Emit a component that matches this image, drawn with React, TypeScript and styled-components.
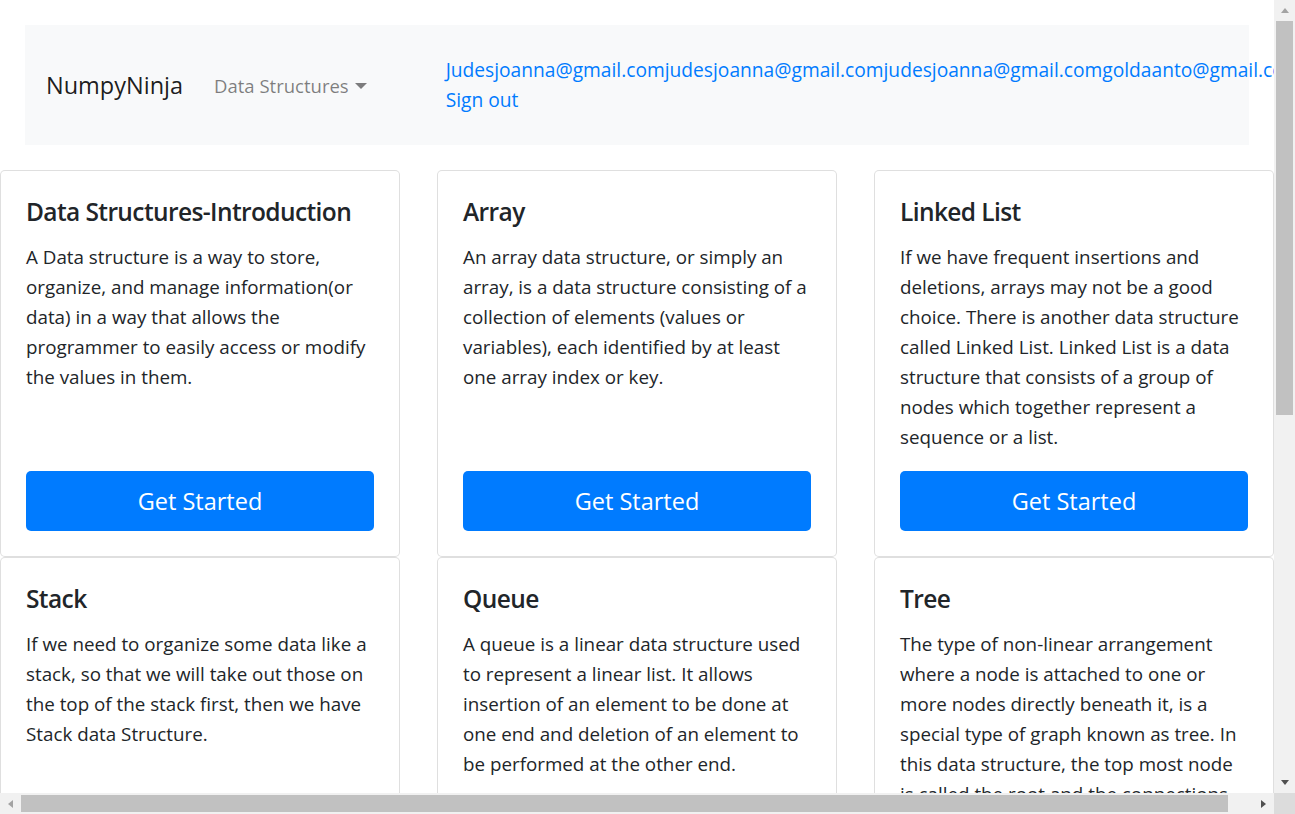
import React from 'react';
import styled, { createGlobalStyle } from 'styled-components';

interface Topic {
  title: string;
  text: string;
}

type Direction = 'up' | 'down' | 'left' | 'right';

const topics: Topic[] = [
  {
    title: 'Data Structures-Introduction',
    text: 'A Data structure is a way to store, organize, and manage information(or data) in a way that allows the programmer to easily access or modify the values in them.',
  },
  {
    title: 'Array',
    text: 'An array data structure, or simply an array, is a data structure consisting of a collection of elements (values or variables), each identified by at least one array index or key.',
  },
  {
    title: 'Linked List',
    text: 'If we have frequent insertions and deletions, arrays may not be a good choice. There is another data structure called Linked List. Linked List is a data structure that consists of a group of nodes which together represent a sequence or a list.',
  },
  {
    title: 'Stack',
    text: 'If we need to organize some data like a stack, so that we will take out those on the top of the stack first, then we have Stack data Structure.',
  },
  {
    title: 'Queue',
    text: 'A queue is a linear data structure used to represent a linear list. It allows insertion of an element to be done at one end and deletion of an element to be performed at the other end.',
  },
  {
    title: 'Tree',
    text: 'The type of non-linear arrangement where a node is attached to one or more nodes directly beneath it, is a special type of graph known as tree. In this data structure, the top most node is called the root and the connections between the nodes are called edges.',
  },
  {
    title: 'Graph',
    text: 'A graph is a non-linear data structure consisting of vertices (or nodes) and edges that connect pairs of vertices. Graphs are used to model networks such as roads, social links and web pages.',
  },
];

const userEmails = 'Judesjoanna@gmail.comjudesjoanna@gmail.comjudesjoanna@gmail.comgoldaanto@gmail.com';

function App(): JSX.Element {
  return (
    <>
      <GlobalStyle />
      <Page>
        <Navbar>
          <Brand>NumpyNinja</Brand>
          <DropdownToggle>Data Structures</DropdownToggle>
          <UserBox>
            <UserLink>{userEmails}</UserLink>
            <UserLink>Sign out</UserLink>
          </UserBox>
        </Navbar>
        <CardGrid>
          {topics.map((topic) => (
            <Card key={topic.title}>
              <CardTitle>{topic.title}</CardTitle>
              <CardText>{topic.text}</CardText>
              <StartButton>Get Started</StartButton>
            </Card>
          ))}
        </CardGrid>
      </Page>
      {/* window scrollbars, drawn since the browser hides its own */}
      <VScrollbar>
        <ScrollButton>
          <Arrow dir="up" />
        </ScrollButton>
        <VTrack>
          <VThumb />
        </VTrack>
        <ScrollButton>
          <Arrow dir="down" active />
        </ScrollButton>
      </VScrollbar>
      <HScrollbar>
        <ScrollButton>
          <Arrow dir="left" />
        </ScrollButton>
        <HTrack>
          <HThumb />
        </HTrack>
        <ScrollButton>
          <Arrow dir="right" active />
        </ScrollButton>
      </HScrollbar>
      <ScrollCorner />
    </>
  );
}

const GlobalStyle = createGlobalStyle`
  html,
  body {
    margin: 0;
    padding: 0;
    background: #fff;
    color: #212529;
    font-family: 'Open Sans', 'Noto Sans', sans-serif;
  }
  * {
    box-sizing: border-box;
  }
  ::-webkit-scrollbar {
    display: none;
  }
`;

const Page = styled.div`
  width: 1274px;
  padding: 25px 0 185px;
`;

const Navbar = styled.nav`
  height: 120px;
  margin: 0 25px;
  padding: 0 21px;
  display: flex;
  align-items: center;
  background-color: #f8f9fa;
  & > * {
    flex-shrink: 0;
  }
`;

const Brand = styled.span`
  margin-right: 31px;
  font-size: 23.5px;
  line-height: 30px;
  color: rgba(0, 0, 0, 0.9);
`;

const DropdownToggle = styled.span`
  display: flex;
  align-items: center;
  padding-top: 2px;
  white-space: nowrap;
  font-size: 18.5px;
  line-height: 30px;
  color: rgba(0, 0, 0, 0.5);
  &::after {
    content: '';
    margin-left: 6px;
    border-top: 6px solid;
    border-right: 6px solid transparent;
    border-left: 6px solid transparent;
  }
`;

const UserBox = styled.div`
  display: flex;
  flex-direction: column;
  margin-left: 79px;
`;

const UserLink = styled.a`
  font-size: 19.2px;
  line-height: 30px;
  color: #007bff;
  white-space: nowrap;
  cursor: pointer;
`;

const CardGrid = styled.section`
  margin-top: 25px;
  display: grid;
  grid-template-columns: repeat(3, 400px);
  column-gap: 37px;
`;

const Card = styled.article`
  display: flex;
  flex-direction: column;
  padding: 25px;
  border: 1px solid rgba(0, 0, 0, 0.125);
  border-radius: 5px;
  background: #fff;
`;

const CardTitle = styled.h4`
  margin: 0 0 15px;
  padding-top: 1px;
  font-size: 24.5px;
  font-weight: 600;
  letter-spacing: -0.6px;
  line-height: 30px;
`;

const CardText = styled.p`
  flex: 1;
  margin: 0 0 19px;
  font-size: 18.8px;
  line-height: 30px;
`;

const StartButton = styled.button`
  height: 60px;
  width: 100%;
  border: none;
  border-radius: 5px;
  background-color: #007bff;
  color: #fff;
  font-family: inherit;
  font-size: 23.5px;
  cursor: pointer;
`;

const VScrollbar = styled.div`
  position: fixed;
  top: 0;
  right: 0;
  width: 21px;
  height: 793px;
  display: flex;
  flex-direction: column;
  background: #f1f1f1;
`;

const HScrollbar = styled.div`
  position: fixed;
  left: 0;
  bottom: 0;
  width: 1274px;
  height: 21px;
  display: flex;
  background: #f1f1f1;
`;

const ScrollCorner = styled.div`
  position: fixed;
  right: 0;
  bottom: 0;
  width: 21px;
  height: 21px;
  background: #dcdcdc;
`;

const ScrollButton = styled.div`
  width: 21px;
  height: 21px;
  flex-shrink: 0;
  display: flex;
  align-items: center;
  justify-content: center;
`;

const VTrack = styled.div`
  flex: 1;
  padding: 0 2px;
`;

const VThumb = styled.div`
  height: 394px;
  background: #c1c1c1;
`;

const HTrack = styled.div`
  flex: 1;
  padding: 2px 0;
`;

const HThumb = styled.div`
  width: 1207px;
  height: 100%;
  background: #c1c1c1;
`;

const Arrow = styled.span<{ dir: Direction; active?: boolean }>`
  width: 0;
  height: 0;
  border: 4.5px solid transparent;
  ${({ dir, active }) => {
    const color = active ? '#505050' : '#a3a3a3';
    if (dir === 'up') return `border-top-width: 0; border-bottom: 5px solid ${color};`;
    if (dir === 'down') return `border-bottom-width: 0; border-top: 5px solid ${color};`;
    if (dir === 'left') return `border-left-width: 0; border-right: 5px solid ${color};`;
    return `border-right-width: 0; border-left: 5px solid ${color};`;
  }}
`;

export default App;
